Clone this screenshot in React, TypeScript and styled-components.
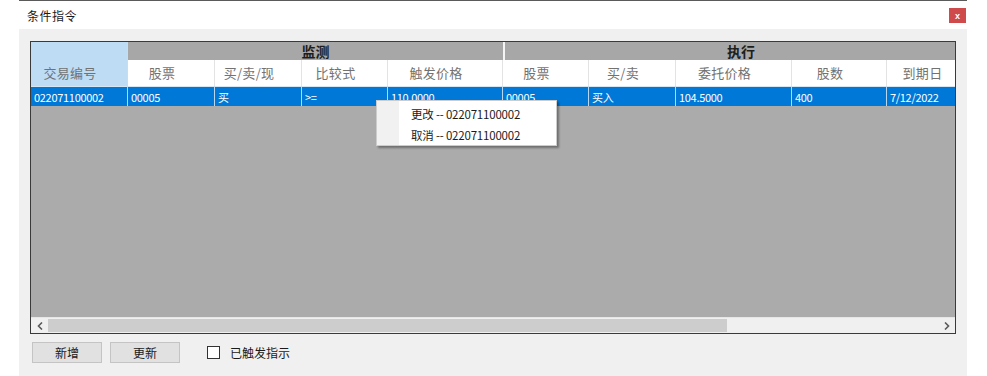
import React from "react";
import styled, { createGlobalStyle } from "styled-components";

const GlobalStyle = createGlobalStyle`
  html, body { margin: 0; padding: 0; background: #ffffff; }
  body { font-family: "Noto Sans CJK SC", "Liberation Sans", sans-serif; }
  * { box-sizing: border-box; }
`;

const CJK = `"Noto Sans CJK SC", "Liberation Sans", sans-serif`;

const Page = styled.div`
  width: 987px;
  height: 376px;
  padding-left: 19px;
  overflow: hidden;
  background: #ffffff;
`;

const Window = styled.div`
  width: 948px;
  height: 376px;
  display: flex;
  flex-direction: column;
  border-top: 1px solid #5a5a5a;
`;

const TitleBar = styled.div`
  height: 28px;
  display: flex;
  align-items: flex-start;
  justify-content: space-between;
  padding: 0 1px 0 8px;
  background: #ffffff;
`;

const Title = styled.div`
  font-family: ${CJK};
  font-size: 12px;
  letter-spacing: 0.5px;
  color: #1a1a1a;
  margin-top: 7px;
  line-height: 16px;
`;

const CloseButton = styled.div`
  width: 17px;
  height: 15px;
  margin-top: 7px;
  background: #cf4a4a;
  color: #ffffff;
  font-family: "Liberation Sans", sans-serif;
  font-size: 9px;
  font-weight: bold;
  display: flex;
  align-items: center;
  justify-content: center;
`;

const Body = styled.div`
  flex: 1;
  background: #f0f0f0;
  padding: 12px 11px 0 11px;
  display: flex;
  flex-direction: column;
`;

const Grid = styled.div`
  position: relative;
  width: 926px;
  height: 293px;
  border: 1px solid #3a3a3a;
  background: #ababab;
  display: flex;
  flex-direction: column;
  overflow: hidden;
`;

const Viewport = styled.div`
  flex: 1;
  overflow: hidden;
`;

const COLS = [97, 87, 87, 86, 115, 86, 87, 116, 95, 90];

const Table = styled.div`
  display: grid;
  grid-template-columns: ${COLS.map((c) => c + "px").join(" ")};
  grid-template-rows: 18px 26px 20px;
  width: ${COLS.reduce((a, b) => a + b, 0)}px;
`;

const CornerHeader = styled.div`
  grid-row: 1 / span 2;
  grid-column: 1;
  background: #bedcf4;
  border-right: 1px solid #d8d8d8;
  display: flex;
  align-items: flex-end;
  justify-content: center;
  padding: 0 18px 4px 0;
  font-family: ${CJK};
  font-size: 13px;
  letter-spacing: 0.3px;
  color: #727272;
`;

const GroupHeader = styled.div<{ $from: number; $span: number; $gap?: boolean }>`
  grid-row: 1;
  grid-column: ${(p) => p.$from} / span ${(p) => p.$span};
  background: #a7a7a7;
  border-left: ${(p) => (p.$gap ? "2px solid #f4f4f4" : "none")};
  display: flex;
  align-items: center;
  justify-content: center;
  font-family: ${CJK};
  font-size: 14px;
  font-weight: bold;
  color: #1e1e1e;
  line-height: 18px;
`;

const ColHeader = styled.div`
  grid-row: 2;
  background: #ffffff;
  border-right: 1px solid #e3e3e3;
  display: flex;
  align-items: flex-end;
  justify-content: center;
  padding: 0 18px 4px 0;
  font-family: ${CJK};
  font-size: 13px;
  letter-spacing: 0.3px;
  color: #727272;
  white-space: nowrap;
`;

const Cell = styled.div`
  grid-row: 3;
  background: #0078d7;
  border-right: 1px solid #b9d7f0;
  border-top: 1px solid #d6e6f3;
  color: #ffffff;
  font-family: ${CJK};
  font-size: 11px;
  letter-spacing: -0.3px;
  display: flex;
  align-items: center;
  padding-left: 3px;
  white-space: nowrap;
`;

const HScroll = styled.div`
  height: 16px;
  display: flex;
  background: #f0f0f0;
  border-top: 1px solid #e6e6e6;
`;

const ArrowBtn = styled.div`
  width: 17px;
  display: flex;
  align-items: center;
  justify-content: center;
`;

const Track = styled.div`
  flex: 1;
  display: flex;
  align-items: stretch;
  padding: 1px 0;
`;

const Thumb = styled.div`
  width: 679px;
  background: #cdcdcd;
`;

const Menu = styled.div`
  position: absolute;
  left: 345px;
  top: 58px;
  width: 181px;
  height: 46px;
  background: #ffffff;
  border: 1px solid #cccccc;
  box-shadow: 2px 2px 2px rgba(0, 0, 0, 0.35);
  display: flex;
`;

const Gutter = styled.div`
  width: 22px;
  background: #f1f1f1;
`;

const MenuItems = styled.div`
  flex: 1;
  display: flex;
  flex-direction: column;
  padding-top: 2px;
`;

const MenuItem = styled.div`
  height: 21px;
  display: flex;
  align-items: center;
  padding-left: 12px;
  font-family: ${CJK};
  font-size: 11.5px;
  letter-spacing: -0.2px;
  color: #1a1a1a;
  white-space: nowrap;
`;

const Footer = styled.div`
  display: flex;
  align-items: center;
  margin-top: 8px;
  padding-left: 2px;
`;

const Button = styled.div`
  width: 70px;
  height: 21px;
  margin-right: 8px;
  background: #e1e1e1;
  border: 1px solid #c4c4c4;
  display: flex;
  align-items: center;
  justify-content: center;
  font-family: ${CJK};
  font-size: 12px;
  color: #1a1a1a;
`;

const CheckRow = styled.label`
  display: flex;
  align-items: center;
  margin-left: 19px;
  font-family: ${CJK};
  font-size: 12px;
  color: #1a1a1a;
`;

const CheckBox = styled.span`
  width: 13px;
  height: 13px;
  border: 1px solid #333333;
  background: #ffffff;
  margin-right: 10px;
`;

const Chevron = ({ dir }: { dir: "left" | "right" }) => (
  <svg width="6" height="8" viewBox="0 0 6 8">
    <path
      d={dir === "left" ? "M5 0.5 L1.5 4 L5 7.5" : "M1 0.5 L4.5 4 L1 7.5"}
      fill="none"
      stroke="#5a5a5a"
      strokeWidth="1.6"
    />
  </svg>
);

const headers = ["股票", "买/卖/现", "比较式", "触发价格", "股票", "买/卖", "委托价格", "股数", "到期日"];
const row = ["022071100002", "00005", "买", ">=", "110.0000", "00005", "买入", "104.5000", "400", "7/12/2022"];

export default function App() {
  return (
    <Page>
      <GlobalStyle />
      <Window>
        <TitleBar>
          <Title>条件指令</Title>
          <CloseButton>x</CloseButton>
        </TitleBar>
        <Body>
          <Grid>
            <Viewport>
              <Table>
                <CornerHeader>交易编号</CornerHeader>
                <GroupHeader $from={2} $span={4}>监测</GroupHeader>
                <GroupHeader $from={6} $span={5} $gap>执行</GroupHeader>
                {headers.map((h, i) => (
                  <ColHeader key={i}>{h}</ColHeader>
                ))}
                {row.map((v, i) => (
                  <Cell key={i}>{v}</Cell>
                ))}
              </Table>
            </Viewport>
            <HScroll>
              <ArrowBtn>
                <Chevron dir="left" />
              </ArrowBtn>
              <Track>
                <Thumb />
              </Track>
              <ArrowBtn>
                <Chevron dir="right" />
              </ArrowBtn>
            </HScroll>
            <Menu>
              <Gutter />
              <MenuItems>
                <MenuItem>更改 -- 022071100002</MenuItem>
                <MenuItem>取消 -- 022071100002</MenuItem>
              </MenuItems>
            </Menu>
          </Grid>
          <Footer>
            <Button>新增</Button>
            <Button>更新</Button>
            <CheckRow>
              <CheckBox />
              已触发指示
            </CheckRow>
          </Footer>
        </Body>
      </Window>
    </Page>
  );
}
